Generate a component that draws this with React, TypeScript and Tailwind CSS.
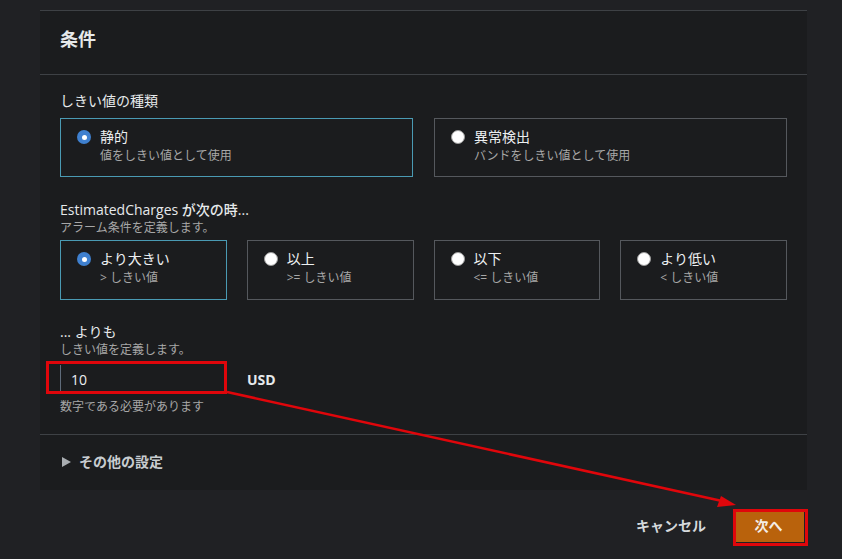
import React from 'react';

const font = { fontFamily: '"Open Sans", "Noto Sans CJK JP", sans-serif' };

type Opt = { title: string; sub: string; selected?: boolean };

const Radio: React.FC<{ on?: boolean }> = ({ on }) =>
  on ? (
    <span className="mt-[3px] flex h-[14px] w-[14px] shrink-0 items-center justify-center rounded-full bg-[#3f80cf]">
      <span className="h-[5px] w-[5px] rounded-full bg-white" />
    </span>
  ) : (
    <span className="mt-[3px] h-[14px] w-[14px] shrink-0 rounded-full border border-[#9a9a9a] bg-white" />
  );

const Tile: React.FC<Opt> = ({ title, sub, selected }) => (
  <div
    className={`flex gap-[9px] border px-[16px] pt-[8px] ${
      selected ? 'border-[#4a9ab3]' : 'border-[#55585d]'
    }`}
  >
    <Radio on={selected} />
    <div>
      <div className="text-[14px] leading-[20px] text-[#eceff1]">{title}</div>
      <div className="text-[12px] leading-[18px] text-[#a7a7a7]">{sub}</div>
    </div>
  </div>
);

export default function App() {
  return (
    <div className="relative h-[559px] w-[842px] overflow-hidden bg-[#202124]" style={font}>
      <div className="pl-[40px] pt-[10px]">
        <div className="w-[767px] border-t border-[#3e4145] bg-[#1b1c1e]">
          <div className="flex h-[64px] items-center border-b border-[#3e4145] px-[20px] pb-[6px]">
            <h2 className="text-[18px] font-bold text-[#e6e9eb]">条件</h2>
          </div>

          <div className="px-[20px] pt-[16px]">
            <div className="text-[14px] leading-[20px] text-[#e6e9eb]">しきい値の種類</div>
            <div className="mt-[7px] grid h-[59px] grid-cols-2 gap-[21px]">
              <Tile title="静的" sub="値をしきい値として使用" selected />
              <Tile title="異常検出" sub="バンドをしきい値として使用" />
            </div>

            <div className="mt-[23px] text-[14px] font-medium leading-[20px] text-[#e6e9eb]">
              EstimatedCharges が次の時...
            </div>
            <div className="text-[12px] leading-[16px] text-[#a7a7a7]">アラーム条件を定義します。</div>
            <div className="mt-[4px] grid h-[60px] grid-cols-4 gap-[20px]">
              <Tile title="より大きい" sub="> しきい値" selected />
              <Tile title="以上" sub=">= しきい値" />
              <Tile title="以下" sub="<= しきい値" />
              <Tile title="より低い" sub="< しきい値" />
            </div>

            <div className="mt-[22px] text-[14px] leading-[20px] text-[#e6e9eb]">... よりも</div>
            <div className="text-[12px] leading-[16px] text-[#a7a7a7]">しきい値を定義します。</div>
            <div className="mt-[7px] flex items-center">
              <div className="flex h-[28px] w-[162px] items-center border-l border-[#5f6b7a] pl-[10px] text-[14px] font-medium text-[#eceff1]">
                10
              </div>
              <span className="ml-[25px] text-[14px] font-bold text-[#e6e9eb]">USD</span>
            </div>
            <div className="mt-[6px] pb-[19px] text-[12px] leading-[16px] text-[#a7a7a7]">数字である必要があります</div>
          </div>

          <div className="flex h-[56px] items-center gap-[8px] border-t border-[#3e4145] px-[22px] pb-[2px]">
            <svg width="9" height="10" viewBox="0 0 9 10">
              <path d="M0 0 L9 5 L0 10 Z" fill="#a9adb1" />
            </svg>
            <span className="text-[14px] font-bold text-[#c8ccd0]">その他の設定</span>
          </div>
        </div>
      </div>

      <div className="flex items-center justify-end gap-[27px] pr-[38px] pt-[19px]">
        <span className="text-[14px] font-bold text-[#d5d9dc]">キャンセル</span>
        <button className="h-[33px] w-[71px] bg-[#b9620c] text-[14px] font-bold text-[#f4ede6]">次へ</button>
      </div>

      {/* annotation overlay */}
      <div className="pointer-events-none absolute left-[46px] top-[361px] h-[33px] w-[181px] border-[3px] border-[#e0060b]" />
      <div className="pointer-events-none absolute left-[733px] top-[509px] h-[37px] w-[75px] border-[3px] border-[#e0060b]" />
      <svg className="pointer-events-none absolute left-0 top-0" width="842" height="559">
        <line x1="227" y1="392" x2="722" y2="501" stroke="#e0060b" strokeWidth="2.5" />
        <path d="M736 505 L717 507 L721 496 Z" fill="#e0060b" />
      </svg>
    </div>
  );
}
